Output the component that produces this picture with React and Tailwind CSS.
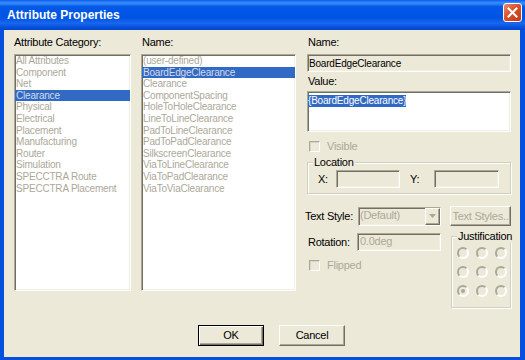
import React from 'react';

const sunken = 'border border-t-[#aca899] border-l-[#aca899] border-b-white border-r-white shadow-[inset_1px_1px_0_#716f64,inset_-1px_-1px_0_#f1efe2]';
const raised = 'border border-t-white border-l-white border-b-[#716f64] border-r-[#716f64] shadow-[inset_-1px_-1px_0_#aca899]';
const etched = 'border border-[#d0d0bf] shadow-[inset_1px_1px_0_#fff,1px_1px_0_#fff]';

const categories = ['All Attributes', 'Component', 'Net', 'Clearance', 'Physical', 'Electrical', 'Placement', 'Manufacturing', 'Router', 'Simulation', 'SPECCTRA Route', 'SPECCTRA Placement'];
const names = ['(user-defined)', 'BoardEdgeClearance', 'Clearance', 'ComponentSpacing', 'HoleToHoleClearance', 'LineToLineClearance', 'PadToLineClearance', 'PadToPadClearance', 'SilkscreenClearance', 'ViaToLineClearance', 'ViaToPadClearance', 'ViaToViaClearance'];

const ListBox = ({ items, selected, className }) => (
  <div className={`bg-white overflow-hidden text-[10px] tracking-[-0.2px] ${sunken} ${className}`}>
    {items.map((it, i) => (
      <div key={it} className={`h-[11.6px] leading-[11.6px] pl-[1px] whitespace-nowrap ${i === selected ? 'bg-[#316ac5] text-[#d6dae6]' : 'text-[#aca899]'}`}>{it}</div>
    ))}
  </div>
);

const Check = ({ label }) => (
  <div className="flex items-center h-[13px]">
    <div className="w-[11px] h-[11px] ml-[2px] border border-t-[#aca899] border-l-[#aca899] border-b-white border-r-white shadow-[inset_1px_1px_0_#d8d5c5]" />
    <span className="ml-[7px] text-[#aca899]">{label}</span>
  </div>
);

const Radio = ({ on }) => (
  <div className="w-[12px] h-[12px] rounded-full border-2 border-t-[#aca899] border-l-[#aca899] border-b-white border-r-white flex items-center justify-center">
    {on && <div className="w-[4px] h-[4px] rounded-full bg-[#aca899]" />}
  </div>
);

const GroupLabel = ({ children, left = 'left-[5px]' }) => (
  <span className={`absolute -top-[7px] ${left} px-[1px] bg-[#ece9d8] leading-[13px] whitespace-nowrap`}>{children}</span>
);

export default function App() {
  return (
    <div className="w-[525px] h-[360px] overflow-hidden flex flex-col bg-[#0650dd] font-['Liberation_Sans',Arial,sans-serif] text-[11px] tracking-[-0.25px] text-black">
      {/* title bar */}
      <div className="h-[30px] flex items-start bg-[linear-gradient(to_bottom,#0a5ef0_0%,#3d8ffb_10%,#0358e6_22%,#0054e3_60%,#1a66ee_78%,#0a55e2_88%,#0046c9_100%)]">
        <span className="pl-[7px] leading-[30px] text-[12px] font-bold tracking-normal text-white flex-1">Attribute Properties</span>
        <div className="mt-[3px] mr-[3px] w-[19px] h-[19px] rounded-[3px] border border-white bg-[linear-gradient(135deg,#ef8a6a,#d9512b_45%,#c03a18)] flex items-center justify-center">
          <svg width="11" height="11" viewBox="0 0 11 11">
            <path d="M1.5 1.5 L9.5 9.5 M9.5 1.5 L1.5 9.5" stroke="#fff" strokeWidth="2" strokeLinecap="square" />
          </svg>
        </div>
      </div>

      {/* body */}
      <div className="flex-1 ml-[4px] mr-[5px] mb-[3px] bg-[#ece9d8] pt-[6px] pl-[10px]">
        <div className="flex items-start">
          <div className="w-[117px]">
            <div className="leading-[13px]">Attribute Category:</div>
            <ListBox items={categories} selected={3} className="mt-[5px] h-[237px]" />
          </div>

          <div className="w-[155px] ml-[10px]">
            <div className="leading-[13px] pl-[1px]">Name:</div>
            <ListBox items={names} selected={1} className="mt-[5px] h-[237px]" />
          </div>

          <div className="w-[204px] ml-[11px]">
            <div className="leading-[13px] pl-[1px]">Name:</div>
            <div className={`mt-[5px] h-[18px] flex items-center pl-[1px] text-[10px] tracking-[-0.2px] ${sunken}`}>BoardEdgeClearance</div>
            <div className="mt-[3px] leading-[13px] pl-[1px]">Value:</div>
            <div className={`mt-[3px] h-[41px] bg-white pt-[1px] text-[10px] tracking-[-0.2px] ${sunken}`}>
              <span className="inline-block bg-[#316ac5] text-white leading-[12px]">{'{BoardEdgeClearance}'}</span>
            </div>
            <div className="mt-[8px]">
              <Check label="Visible" />
            </div>

            <div className={`relative mt-[9px] h-[32px] ${etched} flex items-start pt-[7px]`}>
              <GroupLabel>Location</GroupLabel>
              <span className="ml-[10px] w-[18px] leading-[18px]">X:</span>
              <div className={`w-[64px] h-[18px] ${sunken}`} />
              <span className="ml-[10px] w-[24px] leading-[18px]">Y:</span>
              <div className={`w-[65px] h-[18px] ${sunken}`} />
            </div>

            <div className="flex mt-[12px]">
              <div className="w-[143px]">
                <div className="flex items-center h-[20px]">
                  <span className="-ml-[2px] w-[53px]">Text Style:</span>
                  <div className={`w-[83px] h-[19px] flex items-stretch ${sunken}`}>
                    <span className="flex-1 pl-[1px] leading-[15px] text-[#aca899]">(Default)</span>
                    <div className={`w-[15px] bg-[#ece9d8] flex items-center justify-center ${raised}`}>
                      <svg width="7" height="4" viewBox="0 0 7 4"><path d="M0 0 H7 L3.5 4 Z" fill="#aca899" /></svg>
                    </div>
                  </div>
                </div>
                <div className="flex items-center mt-[7px]">
                  <span className="ml-[1px] w-[49px]">Rotation:</span>
                  <div className={`w-[84px] h-[18px] pl-[2px] leading-[14px] text-[#aca899] ${sunken}`}>0.0deg</div>
                </div>
                <div className="mt-[8px]">
                  <Check label="Flipped" />
                </div>
              </div>

              <div className="w-[61px]">
                <div className={`h-[20px] flex items-center justify-center text-[#aca899] ${raised}`}>Text Styles..</div>
                <div className={`relative mt-[10px] ml-[1px] w-[60px] h-[72px] ${etched} pt-[10px] pl-[5px]`}>
                  <GroupLabel left="left-[5px]">Justification</GroupLabel>
                  <div className="grid grid-cols-[12px_12px_12px] gap-[7px]">
                    <Radio /><Radio /><Radio />
                    <Radio /><Radio /><Radio />
                    <Radio on /><Radio /><Radio />
                  </div>
                </div>
              </div>
            </div>
          </div>
        </div>

        <div className="flex mt-[17px] pl-[184px] gap-[15px]">
          <div className={`w-[66px] h-[21px] flex items-center justify-center border border-black shadow-[inset_1px_1px_0_#fff,inset_-1px_-1px_0_#716f64,inset_-2px_-2px_0_#aca899]`}>OK</div>
          <div className={`w-[66px] h-[21px] flex items-center justify-center ${raised}`}>Cancel</div>
        </div>
      </div>
    </div>
  );
}
